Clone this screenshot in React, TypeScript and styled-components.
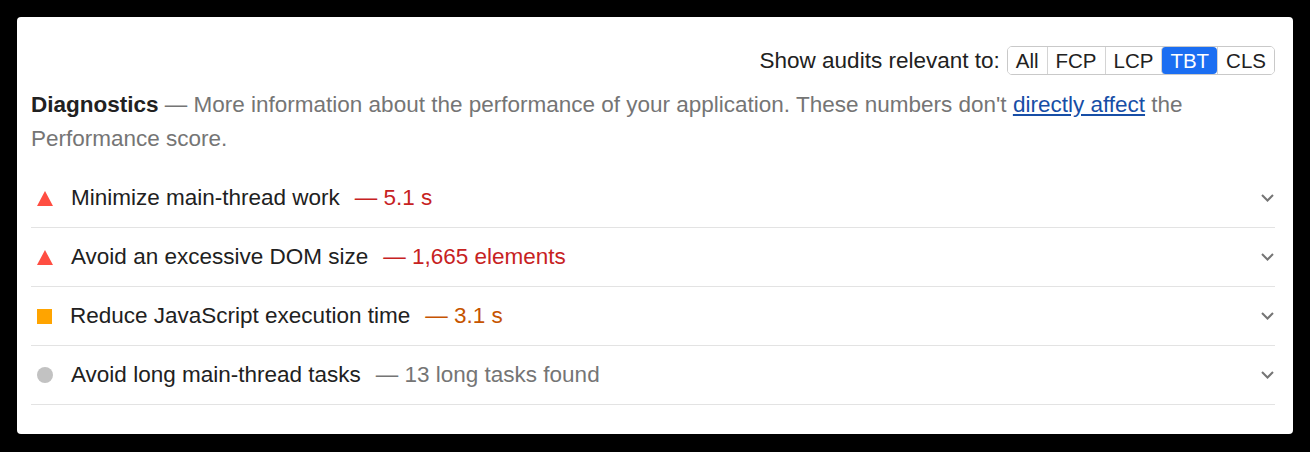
import React from "react";
import styled, { createGlobalStyle } from "styled-components";

const Global = createGlobalStyle`
  html, body { margin: 0; padding: 0; background: #000; }
  body { font-family: "Liberation Sans", Arial, Helvetica, sans-serif; }
  * { box-sizing: border-box; }
`;

const Page = styled.div`
  width: 1310px;
  height: 452px;
  background: #000;
  padding: 17px 17px 0 17px;
`;

const Card = styled.section`
  width: 1276px;
  height: 417px;
  background: #fff;
  border-radius: 4px;
  padding: 29px 18px 30px 14px;
  display: flex;
  flex-direction: column;
`;

const FilterBar = styled.div`
  display: flex;
  justify-content: flex-end;
  align-items: center;
  gap: 7px;
  height: 29px;
`;

const FilterLabel = styled.span`
  font-size: 22.5px;
  color: #212121;
`;

const ButtonGroup = styled.div`
  display: flex;
  align-items: stretch;
  height: 29px;
  border: 1px solid #c9c9c9;
  border-radius: 5px;
  overflow: hidden;
`;

const FilterButton = styled.button<{ $active?: boolean }>`
  font-family: inherit;
  font-size: 20.5px;
  padding: 0 8px;
  border: none;
  border-left: 1px solid #d4d4d4;
  background: ${(p) => (p.$active ? "#1b6ef2" : "#fff")};
  color: ${(p) => (p.$active ? "#fff" : "#212121")};
  border-radius: ${(p) => (p.$active ? "4px" : "0")};
  display: flex;
  align-items: center;
  &:first-child { border-left: none; }
`;

const Description = styled.p`
  margin: 13px 0 0 0;
  font-size: 22.5px;
  line-height: 34px;
  color: #757575;
`;

const GroupTitle = styled.strong`
  color: #212121;
  font-weight: 700;
`;

const Link = styled.a`
  color: #174ea6;
  text-decoration: underline;
`;

const List = styled.div`
  margin-top: 13px;
  display: flex;
  flex-direction: column;
`;

const Row = styled.div`
  height: 59px;
  display: flex;
  align-items: center;
  border-bottom: 1px solid #e3e3e3;
  font-size: 22.5px;
`;

const IconSlot = styled.span`
  display: flex;
  align-items: center;
  margin-left: 6px;
  margin-right: 18px;
`;

const Triangle = styled.span`
  width: 0;
  height: 0;
  border-left: 8px solid transparent;
  border-right: 8px solid transparent;
  border-bottom: 15px solid #ff4e42;
`;

const Square = styled.span`
  width: 15px;
  height: 15px;
  background: #ffa400;
`;

const Circle = styled.span`
  width: 16px;
  height: 16px;
  border-radius: 50%;
  background: #c2c2c2;
`;

const Title = styled.span`
  color: #212121;
`;

const Value = styled.span<{ $color: string }>`
  color: ${(p) => p.$color};
  margin-left: 15px;
`;

const Chevron = styled.span`
  margin-left: auto;
  margin-right: 1px;
  display: flex;
  align-items: center;
`;

type Kind = "fail" | "average" | "info";

const audits: { kind: Kind; title: string; value: string }[] = [
  { kind: "fail", title: "Minimize main-thread work", value: "— 5.1 s" },
  { kind: "fail", title: "Avoid an excessive DOM size", value: "— 1,665 elements" },
  { kind: "average", title: "Reduce JavaScript execution time", value: "— 3.1 s" },
  { kind: "info", title: "Avoid long main-thread tasks", value: "— 13 long tasks found" },
];

const valueColor: Record<Kind, string> = {
  fail: "#c7221f",
  average: "#c65400",
  info: "#757575",
};

const Icon = ({ kind }: { kind: Kind }) =>
  kind === "fail" ? <Triangle /> : kind === "average" ? <Square /> : <Circle />;

export default function App() {
  return (
    <>
      <Global />
      <Page>
        <Card>
          <FilterBar>
            <FilterLabel>Show audits relevant to:</FilterLabel>
            <ButtonGroup>
              {["All", "FCP", "LCP", "TBT", "CLS"].map((m) => (
                <FilterButton key={m} $active={m === "TBT"}>
                  {m}
                </FilterButton>
              ))}
            </ButtonGroup>
          </FilterBar>
          <Description>
            <GroupTitle>Diagnostics</GroupTitle> — More information about the performance of your
            application. These numbers don't <Link href="#">directly affect</Link> the Performance
            score.
          </Description>
          <List>
            {audits.map((a) => (
              <Row key={a.title}>
                <IconSlot>
                  <Icon kind={a.kind} />
                </IconSlot>
                <Title>{a.title}</Title>
                <Value $color={valueColor[a.kind]}>{a.value}</Value>
                <Chevron>
                  <svg width="13" height="8" viewBox="0 0 13 8">
                    <polyline
                      points="1,1 6.5,6.5 12,1"
                      fill="none"
                      stroke="#757575"
                      strokeWidth="2"
                    />
                  </svg>
                </Chevron>
              </Row>
            ))}
          </List>
        </Card>
      </Page>
    </>
  );
}
